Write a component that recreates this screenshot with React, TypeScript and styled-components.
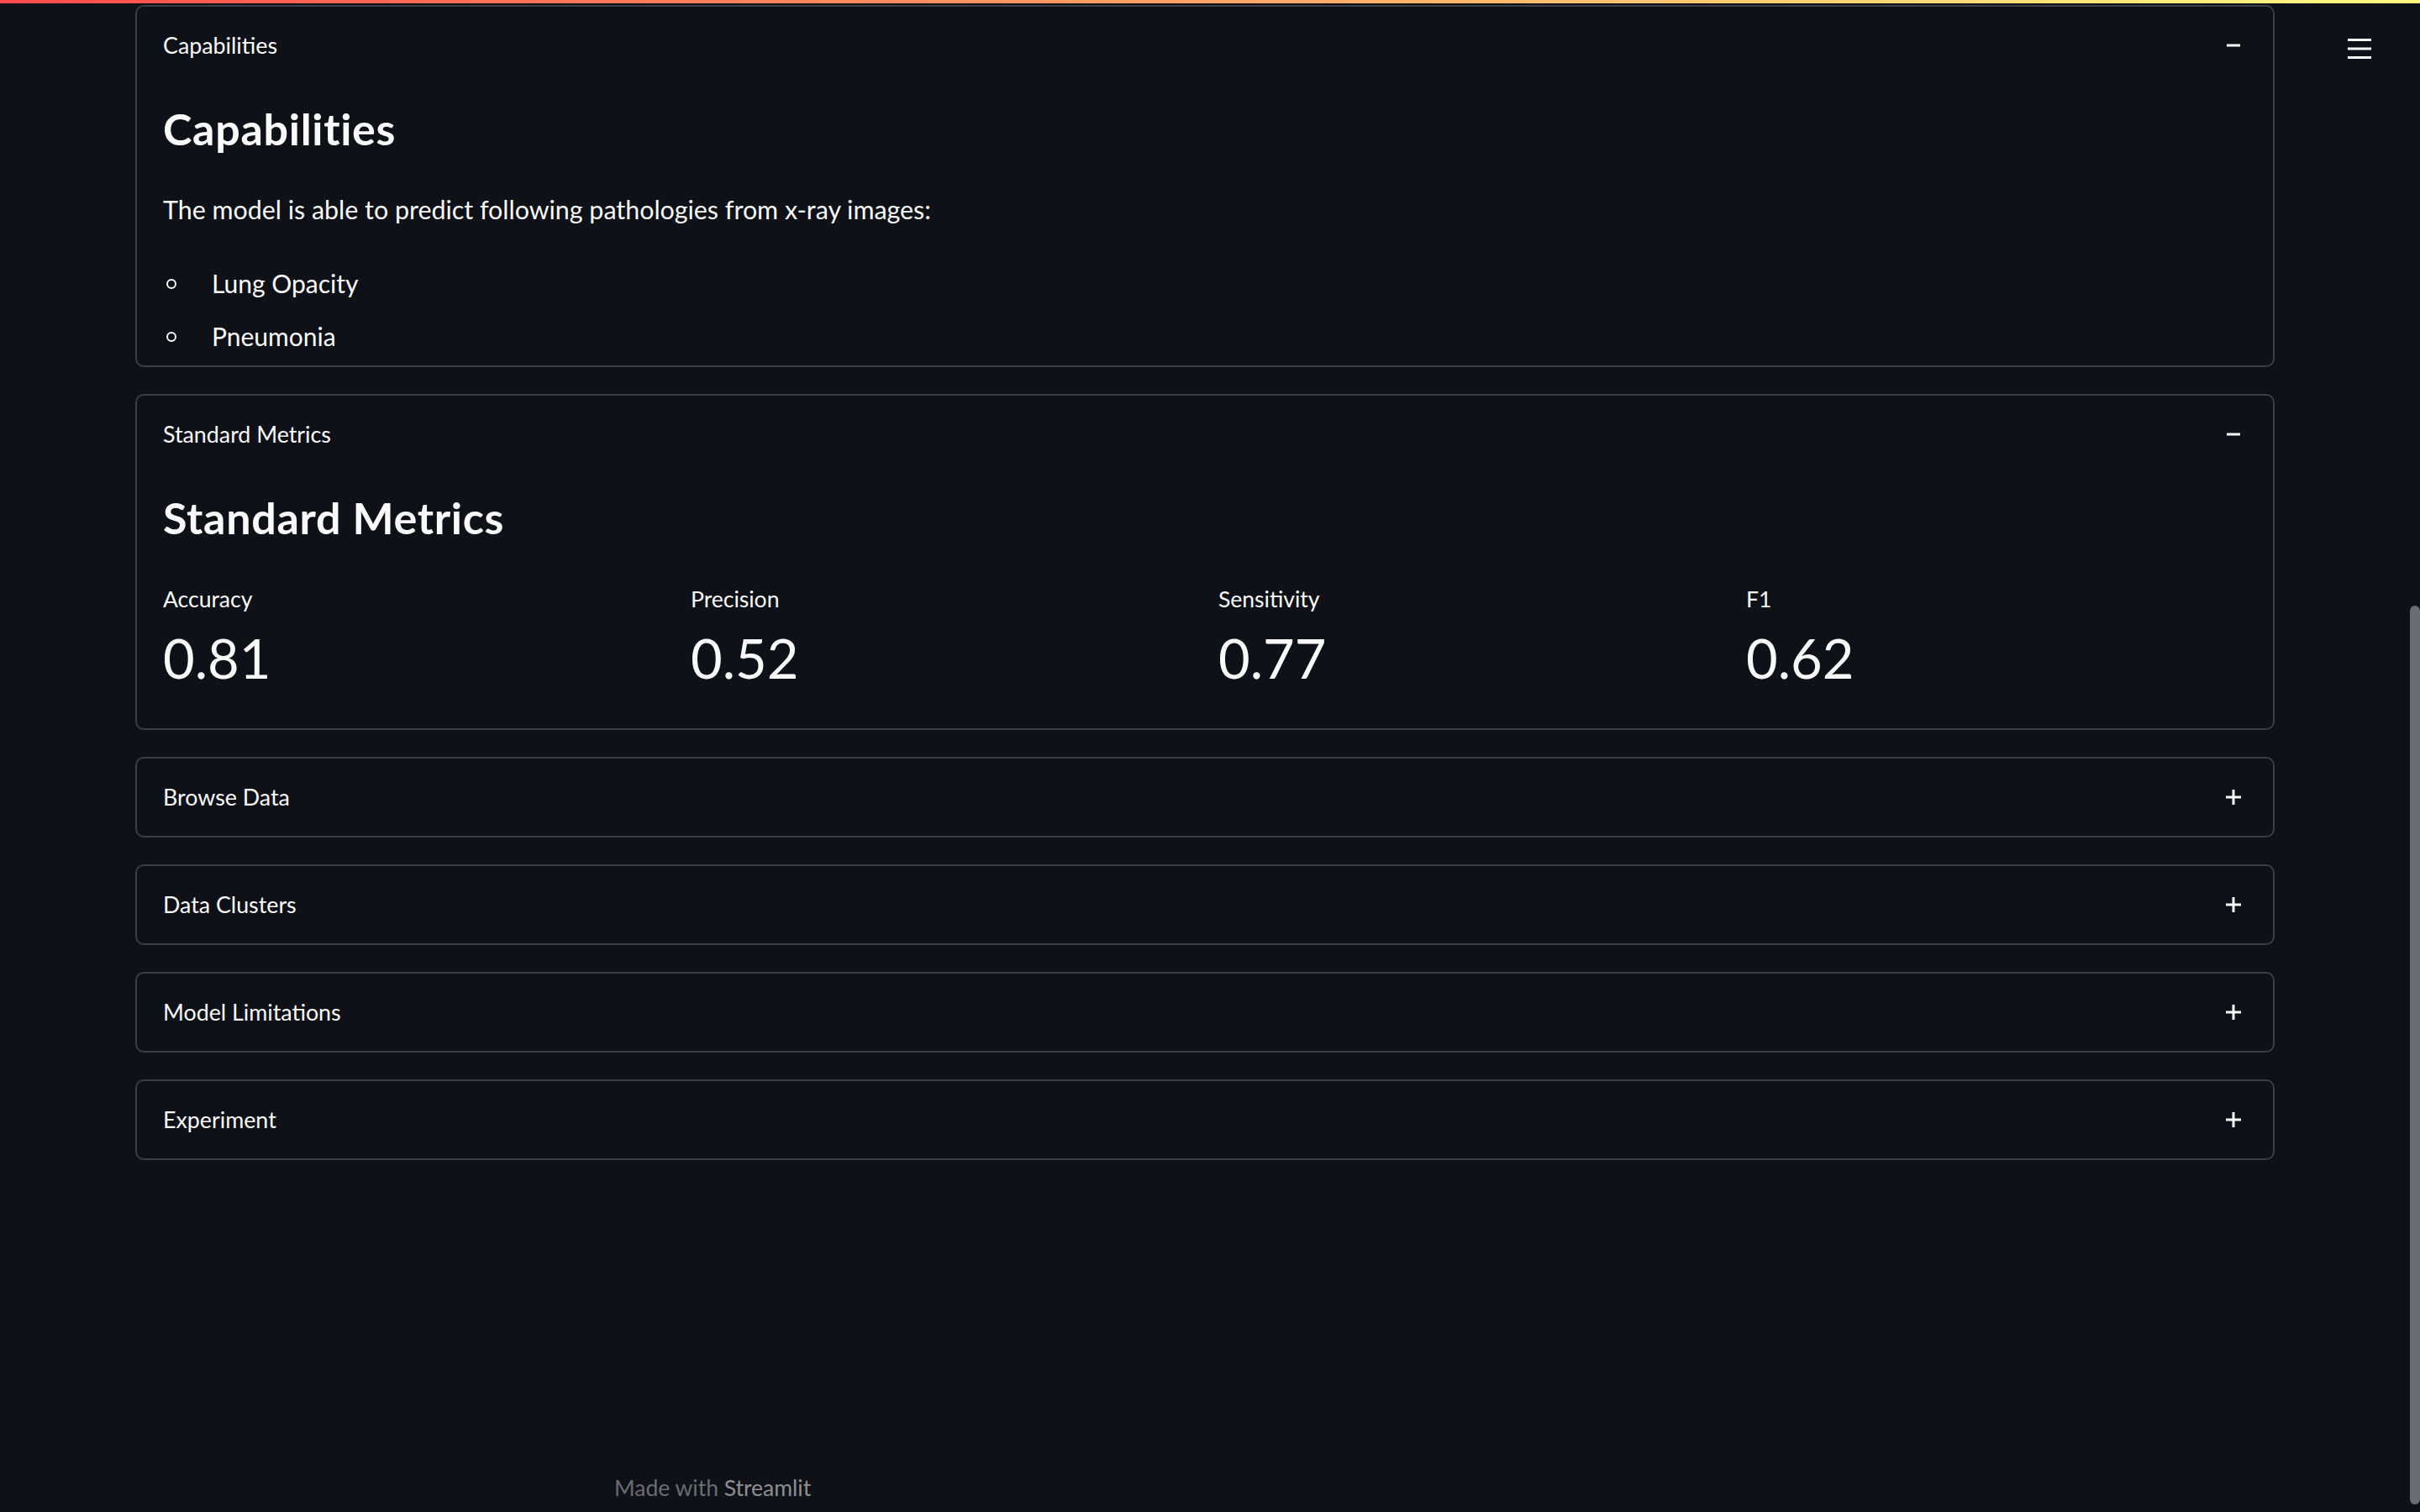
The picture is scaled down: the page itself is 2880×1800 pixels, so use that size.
import React from "react";
import styled, { createGlobalStyle } from "styled-components";

const GlobalStyle = createGlobalStyle`
  html, body {
    margin: 0;
    padding: 0;
    background: #0e1117;
  }
  body {
    font-family: Lato, "Liberation Sans", sans-serif;
    color: #fafafa;
  }
  * { box-sizing: border-box; }
`;

const Page = styled.div`
  position: relative;
  width: 2880px;
  height: 1800px;
  overflow: hidden;
  background: #0e1117;
  display: flex;
  flex-direction: column;
`;

const Decoration = styled.div`
  height: 4px;
  width: 100%;
  flex: none;
  background: linear-gradient(90deg, #ff4b4b, #fffd80);
`;

const MenuButton = styled.div`
  position: absolute;
  top: 45px;
  left: 2794px;
  width: 28px;
  height: 26px;
`;

const ScrollThumb = styled.div`
  position: absolute;
  left: 2868px;
  top: 721px;
  width: 12px;
  height: 1070px;
  border-radius: 6px;
  background: #6b6c71;
`;

const Main = styled.main`
  margin: 2px 0 0 161px;
  width: 2546px;
  display: flex;
  flex-direction: column;
  gap: 32px;
`;

const Expander = styled.section`
  border: 2px solid #3b3e45;
  border-radius: 10px;
`;

const Summary = styled.div`
  height: 92px;
  padding: 0 33px 0 31px;
  display: flex;
  align-items: center;
  justify-content: space-between;
  font-size: 26.8px;
  color: #fafafa;
`;

const ToggleIcon = styled.span`
  width: 28px;
  height: 28px;
  display: flex;
  align-items: center;
  justify-content: center;
`;

const Content = styled.div<{ $pb: number }>`
  padding: 0 31px ${(p) => p.$pb}px 31px;
`;

const Heading = styled.h3`
  margin: 20px 0 0 0;
  font-size: 52px;
  line-height: 67px;
  font-weight: 700;
  letter-spacing: 0.7px;
  color: #fafafa;
`;

const Paragraph = styled.p`
  margin: 37px 0 0 0;
  font-size: 30.4px;
  line-height: 51px;
`;

const List = styled.ul`
  list-style: none;
  margin: 37px 0 0 0;
  padding: 0;
  display: flex;
  flex-direction: column;
  gap: 12px;
`;

const ListItem = styled.li`
  display: flex;
  align-items: center;
  font-size: 30px;
  line-height: 51px;
`;

const Bullet = styled.span`
  width: 12px;
  height: 12px;
  border: 2px solid #fafafa;
  border-radius: 50%;
  margin: 0 42px 0 4px;
  flex: none;
`;

const MetricsRow = styled.div`
  margin-top: 43px;
  display: grid;
  grid-template-columns: repeat(4, 1fr);
  gap: 32px;
`;

const Metric = styled.div`
  display: flex;
  flex-direction: column;
  gap: 10px;
`;

const MetricLabel = styled.div`
  font-size: 26.5px;
  line-height: 40px;
`;

const MetricValue = styled.div`
  font-size: 65px;
  line-height: 80px;
`;

const Footer = styled.footer`
  margin-top: auto;
  width: 1472px;
  align-self: center;
  padding: 0 27px 9px 27px;
  font-size: 26.5px;
  line-height: 40px;
  color: #6b6c71;
`;

const FooterBrand = styled.span`
  color: #8e8f93;
`;

const Minus = () => (
  <svg width="16" height="4" viewBox="0 0 16 4">
    <rect x="0" y="0.5" width="16" height="3" fill="#fafafa" />
  </svg>
);

const Plus = () => (
  <svg width="18" height="18" viewBox="0 0 18 18">
    <rect x="0" y="7.5" width="18" height="3" fill="#fafafa" />
    <rect x="7.5" y="0" width="3" height="18" fill="#fafafa" />
  </svg>
);

const metrics = [
  { label: "Accuracy", value: "0.81" },
  { label: "Precision", value: "0.52" },
  { label: "Sensitivity", value: "0.77" },
  { label: "F1", value: "0.62" },
];

const collapsed = ["Browse Data", "Data Clusters", "Model Limitations", "Experiment"];

export default function App() {
  return (
    <>
      <GlobalStyle />
      <Page>
        <Decoration />
        <Main>
          <Expander>
            <Summary>
              <span>Capabilities</span>
              <ToggleIcon>
                <Minus />
              </ToggleIcon>
            </Summary>
            <Content $pb={9}>
              <Heading>Capabilities</Heading>
              <Paragraph>The model is able to predict following pathologies from x-ray images:</Paragraph>
              <List>
                <ListItem>
                  <Bullet />
                  Lung Opacity
                </ListItem>
                <ListItem>
                  <Bullet />
                  Pneumonia
                </ListItem>
              </List>
            </Content>
          </Expander>

          <Expander>
            <Summary>
              <span>Standard Metrics</span>
              <ToggleIcon>
                <Minus />
              </ToggleIcon>
            </Summary>
            <Content $pb={44}>
              <Heading>Standard Metrics</Heading>
              <MetricsRow>
                {metrics.map((m) => (
                  <Metric key={m.label}>
                    <MetricLabel>{m.label}</MetricLabel>
                    <MetricValue>{m.value}</MetricValue>
                  </Metric>
                ))}
              </MetricsRow>
            </Content>
          </Expander>

          {collapsed.map((title) => (
            <Expander key={title}>
              <Summary>
                <span>{title}</span>
                <ToggleIcon>
                  <Plus />
                </ToggleIcon>
              </Summary>
            </Expander>
          ))}
        </Main>
        <Footer>
          Made with <FooterBrand>Streamlit</FooterBrand>
        </Footer>
        <MenuButton>
          <svg width="28" height="26" viewBox="0 0 28 26">
            <rect x="0" y="1" width="28" height="3" fill="#fafafa" />
            <rect x="0" y="11.5" width="28" height="3" fill="#fafafa" />
            <rect x="0" y="22" width="28" height="3" fill="#fafafa" />
          </svg>
        </MenuButton>
        <ScrollThumb />
      </Page>
    </>
  );
}
